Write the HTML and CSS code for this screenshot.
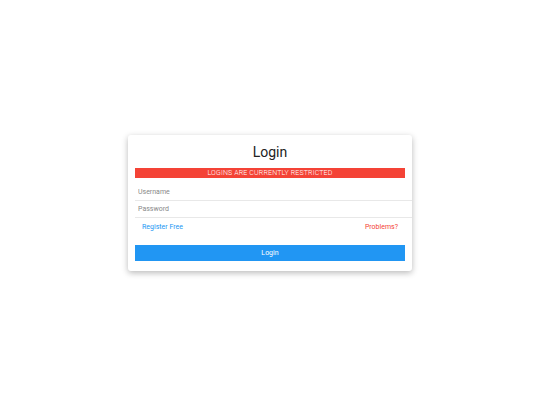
FILE: index.html
```
<!DOCTYPE html>
<html>
<head>
<meta charset="utf-8">
<link rel="stylesheet" href="styles.css">
</head>
<body>
<div class="page">
  <div class="card">
    <h1 class="title">Login</h1>
    <div class="alert">LOGINS ARE CURRENTLY RESTRICTED</div>
    <div class="fields">
      <input class="field" type="text" placeholder="Username">
      <input class="field" type="password" placeholder="Password">
    </div>
    <div class="links">
      <a class="link-register" href="#">Register Free</a>
      <a class="link-problems" href="#">Problems?</a>
    </div>
    <button class="btn">Login</button>
  </div>
</div>
</body>
</html>
```
FILE: styles.css
```
html, body {
  margin: 0;
  padding: 0;
  background: #fff;
  font-family: Roboto, "Liberation Sans", sans-serif;
}
.page {
  width: 540px;
  height: 405px;
  display: flex;
  align-items: center;
  justify-content: center;
}
.card {
  width: 284px;
  box-sizing: border-box;
  padding: 7px 7px 10px 7px;
  background: #fff;
  border-radius: 3px;
  box-shadow: 0 2px 6px rgba(0,0,0,0.28);
  display: flex;
  flex-direction: column;
}
.title {
  margin: 0 0 6px 0;
  font-size: 14px;
  line-height: 20px;
  font-weight: 400;
  text-align: center;
  color: #222;
}
.alert {
  background: #f44336;
  color: #fff;
  font-size: 7px;
  font-weight: 300;
  line-height: 10px;
  height: 10px;
  text-align: center;
  letter-spacing: 0.15px;
}
.fields {
  margin-top: 6px;
  margin-right: -7px;
  display: flex;
  flex-direction: column;
}
.field {
  display: block;
  height: 17px;
  box-sizing: border-box;
  border: none;
  border-bottom: 1px solid #e8e8e8;
  padding: 0 3px;
  margin: 0;
  font-family: Roboto, "Liberation Sans", sans-serif;
  font-size: 7px;
  color: #333;
  outline: none;
  background: transparent;
}
.field::placeholder {
  color: #888;
}
.links {
  display: flex;
  justify-content: space-between;
  padding: 4px 7px 0 7px;
  height: 22px;
  box-sizing: border-box;
  font-size: 7px;
  line-height: 10px;
}
.links a {
  text-decoration: none;
}
.link-register {
  color: #2196f3;
}
.link-problems {
  color: #f44336;
}
.btn {
  display: block;
  width: 100%;
  height: 16px;
  margin: 5px 0 0 0;
  border: none;
  padding: 0;
  background: #2196f3;
  color: #fff;
  font-family: Roboto, "Liberation Sans", sans-serif;
  font-size: 7px;
  line-height: 16px;
  cursor: pointer;
}
```
